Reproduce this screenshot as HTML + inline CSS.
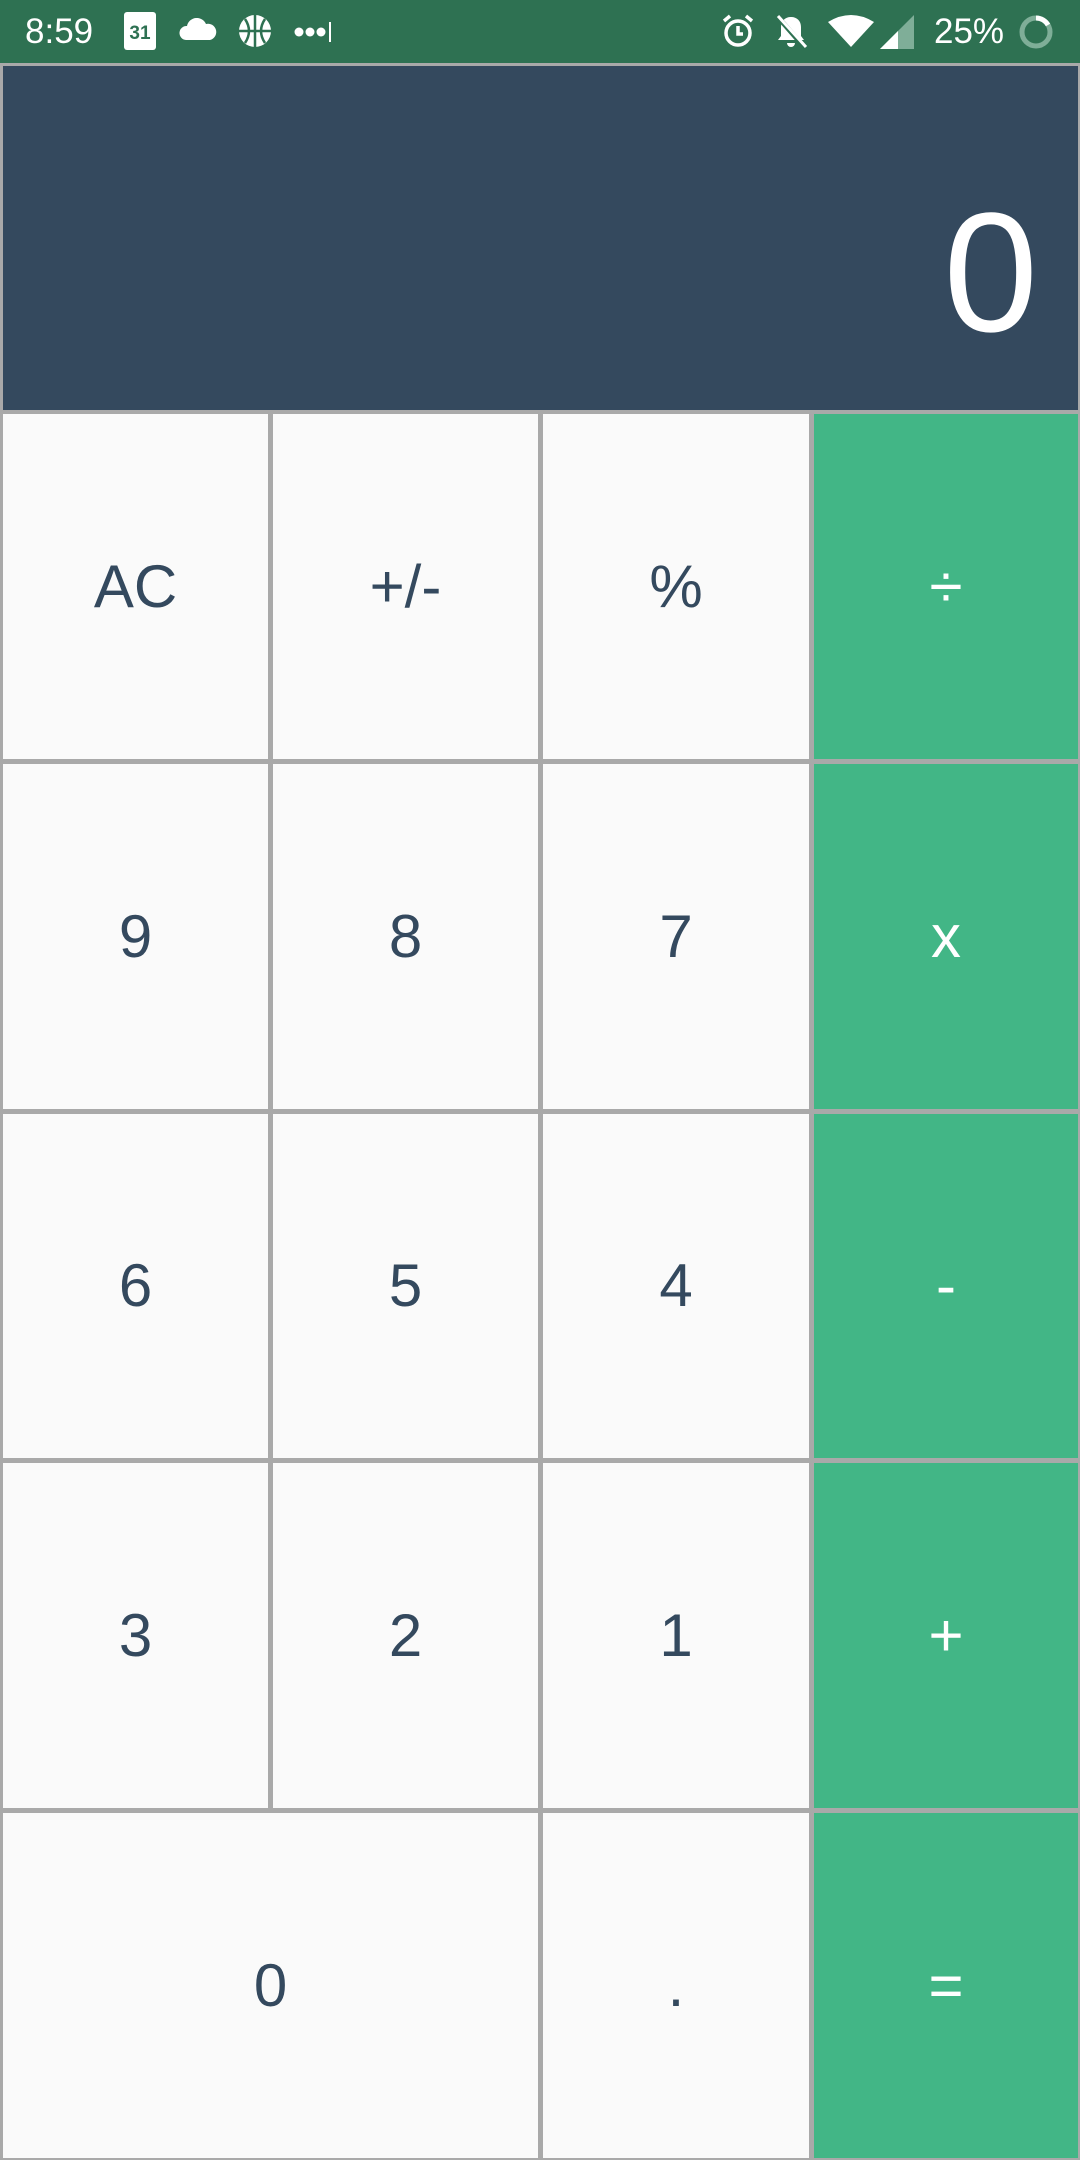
<!DOCTYPE html>
<html><head><meta charset="utf-8"><style>
html,body{margin:0;padding:0;}
body{width:1080px;height:2160px;overflow:hidden;background:#a9a9a9;font-family:"Liberation Sans",sans-serif;position:relative}
.sb{position:absolute;left:0;top:0;width:1080px;height:63px;background:#2e7152;color:#fff}
.disp{position:absolute;left:3px;top:66px;width:1075px;height:344px;background:#34495e;color:#fff}
.disp span{position:absolute;right:40px;top:122px;font-size:170px;line-height:170px}
.grid{position:absolute;left:3px;top:414px;width:1075px;height:1744px;display:grid;grid-template-columns:265px 265px 266px 264px;grid-template-rows:repeat(5,1fr);column-gap:5px;row-gap:5px}
.b{background:#fafafa;color:#34495e;display:flex;align-items:center;justify-content:center;font-size:60px}
.g{background:#42b686;color:#fff}
.z{grid-column:span 2}
</style></head><body>
<div class="sb">
<div style="position:absolute;left:25px;top:12px;font-size:35px">8:59</div>
<div style="position:absolute;left:124px;top:12px;width:32px;height:38px;background:#fff;border-radius:3px;color:#2e7152;font-size:19px;font-weight:bold;text-align:center;line-height:44px">31</div>
<svg style="position:absolute;left:178px;top:18px" width="40" height="24" viewBox="0 0 40 24"><path d="M8 22a7 7 0 0 1 1-14 10 10 0 0 1 19-2 8 8 0 0 1 4 16z" fill="#fff"/></svg>
<svg style="position:absolute;left:238px;top:14px" width="34" height="34" viewBox="0 0 34 34"><circle cx="17" cy="17" r="16" fill="#fff"/><path d="M17 1v32M1 17h32M7 5q8 12 0 24M27 5q-8 12 0 24" stroke="#2e7152" stroke-width="2.5" fill="none"/></svg>
<svg style="position:absolute;left:294px;top:20px" width="40" height="24" viewBox="0 0 40 24"><circle cx="5" cy="12" r="4.5" fill="#fff"/><circle cx="16" cy="12" r="4.5" fill="#fff"/><circle cx="27" cy="12" r="4.5" fill="#fff"/><rect x="35" y="2" width="2" height="20" fill="#fff"/></svg>
<svg style="position:absolute;left:720px;top:13px" width="36" height="36" viewBox="0 0 36 36"><circle cx="18" cy="20" r="12" stroke="#fff" stroke-width="3.5" fill="none"/><path d="M18 13v8h5M4 8l6-5M32 8l-6-5" stroke="#fff" stroke-width="3.5" fill="none"/></svg>
<svg style="position:absolute;left:773px;top:13px" width="36" height="36" viewBox="0 0 36 36"><path d="M18 4c6 0 10 4 10 10v9l3 4H5l3-4v-9C8 8 12 4 18 4zM14 30h8a4 4 0 0 1-8 0z" fill="#fff"/><path d="M4 3l28 32" stroke="#2e7152" stroke-width="5"/><path d="M5 3l28 31" stroke="#fff" stroke-width="3"/></svg>
<svg style="position:absolute;left:826px;top:15px" width="50" height="34" viewBox="0 0 50 34"><path d="M2 7q23-14 46 0L25 32z" fill="#fff"/></svg>
<svg style="position:absolute;left:880px;top:15px" width="36" height="34" viewBox="0 0 36 34"><path d="M34 0v34H0z" fill="#7fae98"/><path d="M18 16v18H0z" fill="#fff"/></svg>
<div style="position:absolute;left:934px;top:12px;font-size:35px">25%</div>
<svg style="position:absolute;left:1018px;top:14px" width="36" height="36" viewBox="0 0 36 36"><circle cx="18" cy="18" r="14" stroke="#7fae98" stroke-width="5" fill="none"/><path d="M18 4a14 14 0 0 1 12 7" stroke="#fff" stroke-width="5" fill="none"/></svg>
</div>
<div class="disp"><span>0</span></div>
<div class="grid">
<div class="b">AC</div><div class="b">+/-</div><div class="b">%</div><div class="b g">÷</div>
<div class="b">9</div><div class="b">8</div><div class="b">7</div><div class="b g">x</div>
<div class="b">6</div><div class="b">5</div><div class="b">4</div><div class="b g">-</div>
<div class="b">3</div><div class="b">2</div><div class="b">1</div><div class="b g">+</div>
<div class="b z">0</div><div class="b">.</div><div class="b g">=</div>
</div>
</body></html>
